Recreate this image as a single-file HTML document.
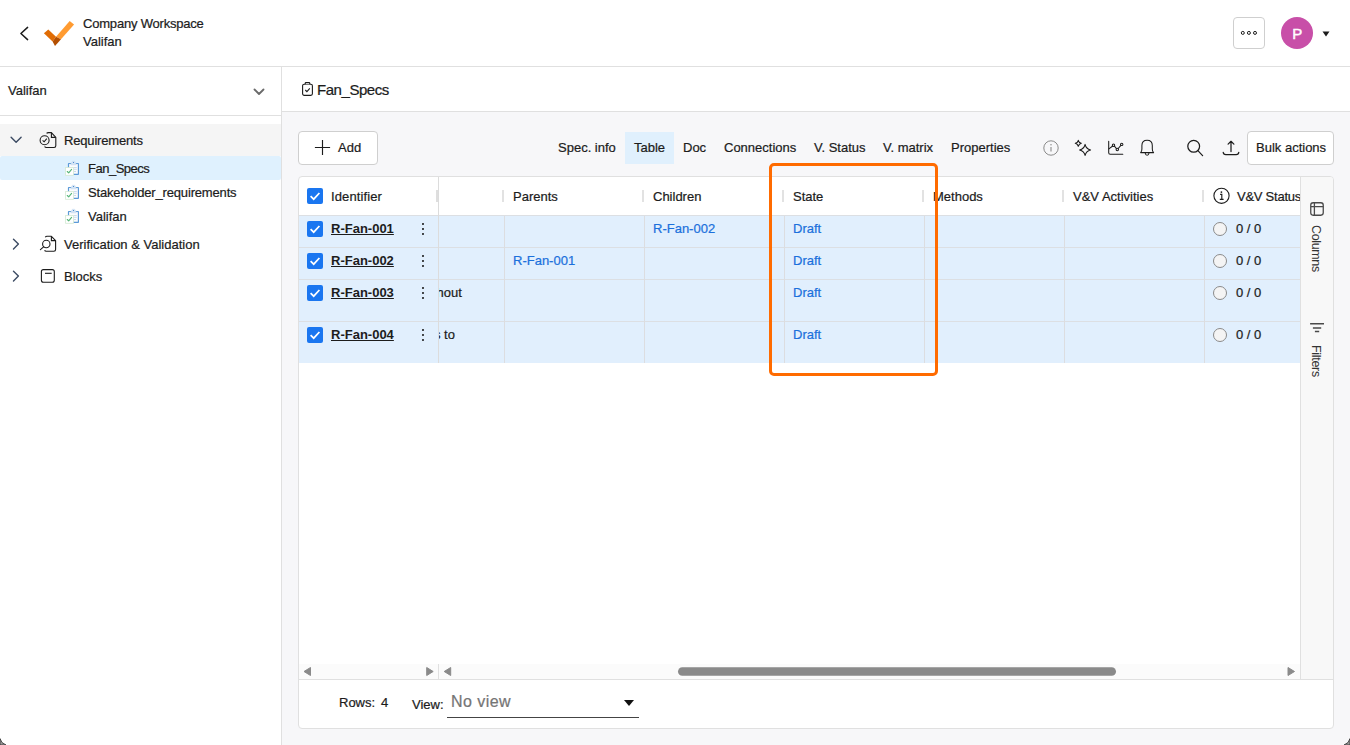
<!DOCTYPE html>
<html><head><meta charset="utf-8">
<style>
*{box-sizing:border-box;margin:0;padding:0}
html,body{width:1350px;height:745px;overflow:hidden;background:#fff}
body{font-family:"Liberation Sans",sans-serif;font-size:13px;color:#1c1c1c;position:relative}
.abs{position:absolute}
#hdr{left:0;top:0;width:1350px;height:67px;border-bottom:1px solid #e0e0e0;background:#fff}
#side{left:0;top:67px;width:282px;height:678px;border-right:1px solid #e0e0e0;background:#fff}
#main{left:282px;top:67px;width:1068px;height:678px;background:#f7f7f9}
#title{left:0;top:0;width:1068px;height:45px;background:#fff;border-bottom:1px solid #e0e0e0}
.t{position:absolute;white-space:nowrap;line-height:1;-webkit-text-stroke:0.22px currentColor}
svg{position:absolute;overflow:visible}
</style></head><body>
<div id="hdr" class="abs">
  <svg style="left:0;top:0" width="80" height="66"><path d="M27.6 27.4 L20.9 33.5 L27.6 39.6" fill="none" stroke="#1c1c1c" stroke-width="1.5" stroke-linecap="round" stroke-linejoin="round"/><path d="M43.9 33.2 L48.3 29.6 L56 36.8 L52.6 41.5 Z" fill="#e06c04"/><path d="M56 36.8 L69.7 20.9 L74.1 24.4 L61 39.2 Z" fill="#ff9b31"/><path d="M56 36.8 L61 39.2 L55 46 L52.6 41.5 Z" fill="#b34f02"/></svg>
  <div class="t" style="left:83px;top:17px;font-size:13px;letter-spacing:-0.2px">Company Workspace</div>
  <div class="t" style="left:83px;top:35px;font-size:13px">Valifan</div>
  <div class="abs" style="left:1233px;top:17px;width:32px;height:32px;border:1px solid #cfcfcf;border-radius:4px;background:#fff"></div>
  <svg style="left:0;top:0" width="1350" height="66"><g fill="none" stroke="#111" stroke-width="0.95"><circle cx="1242.8" cy="32.9" r="1.5"/><circle cx="1248.9" cy="32.9" r="1.5"/><circle cx="1255" cy="32.9" r="1.5"/></g></svg>
  <div class="abs" style="left:1281px;top:17px;width:32px;height:32px;border-radius:16px;background:#c84fa8"></div>
  <div class="t" style="left:1292.2px;top:25.8px;font-size:15px;color:#fff;-webkit-text-stroke:0.45px #fff">P</div>
  <svg style="left:1322px;top:30.8px" width="8" height="6" viewBox="0 0 8 6"><path d="M0.5 0.5 H7.5 L4 5.5 Z" fill="#1c1c1c"/></svg>
</div>
<div id="side" class="abs">
  <div class="t" style="left:8px;top:17px;font-size:13px">Valifan</div>
  <svg style="left:253px;top:21px" width="12" height="8" viewBox="0 0 12 8"><path d="M1.5 1.5 L6 6 L10.5 1.5" fill="none" stroke="#6a6a6a" stroke-width="1.8" stroke-linecap="round" stroke-linejoin="round"/></svg>
  <div class="abs" style="left:0;top:48px;width:281px;height:1px;background:#e0e0e0"></div>
  <div class="abs" style="left:0;top:57px;width:281px;height:32px;background:#f5f5f5"></div>
  <div class="abs" style="left:0;top:89px;width:281px;height:24px;background:#dff1fe;border-radius:2px"></div>
  <svg style="left:0;top:0" width="281" height="300"><path d="M11.1 70.19999999999999 L16.1 75.30000000000001 L21.1 70.19999999999999" fill="none" stroke="#3c4b63" stroke-width="1.4" stroke-linecap="round" stroke-linejoin="round"/><path d="M13.5 172.29999999999998 L18.4 177.1 L13.5 181.9" fill="none" stroke="#3c4b63" stroke-width="1.4" stroke-linecap="round" stroke-linejoin="round"/><path d="M13.5 204.3 L18.4 209.10000000000002 L13.5 213.90000000000003" fill="none" stroke="#3c4b63" stroke-width="1.4" stroke-linecap="round" stroke-linejoin="round"/><path d="M46.6 66.4 Q47.2 65.6 48.4 65.6 H51.4 L55.8 70.4 V78.8 Q55.8 80.5 54.1 80.5 H46.4 Q45.2 80.5 44.6 79.4" fill="none" stroke="#1c1c1c" stroke-width="1.1" stroke-linejoin="round"/><path d="M51.4 65.8 V70.4 H55.6" fill="none" stroke="#1c1c1c" stroke-width="1.1"/><circle cx="44.6" cy="73.2" r="4.5" fill="none" stroke="#1c1c1c" stroke-width="1.1"/><path d="M42.6 73.3 L44.1 74.8 L46.8 71.6" fill="none" stroke="#1c1c1c" stroke-width="1.1"/><g transform="translate(65.2,94.6)"><rect x="3.25" y="1.85" width="10" height="10.9" rx="0.3" fill="#eaf0f7" stroke="#5c9ad8" stroke-width="1.1"/><rect x="4.6" y="3.6" width="7.4" height="8" fill="#fbfcfe"/><path d="M5.9 3.2 V1.6 L7.2 -0.4 H9.4 L10.7 1.6 V3.2 Z" fill="#d3e4f6" stroke="#c2d8f0" stroke-width="0.4"/><circle cx="8.3" cy="0.9" r="0.55" fill="#3b7cc4"/><path d="M8.6 5.9 H11.6 M8.6 7.7 H11.6 M8.6 9.9 H10.8" stroke="#b7cde6" stroke-width="0.7"/><rect x="0.4" y="5.9" width="7.9" height="7.8" fill="#fff" stroke="#d3e9d3" stroke-width="0.8"/><path d="M2.1 9.9 L3.5 11.2 L6.4 7.8" fill="none" stroke="#58b67a" stroke-width="1.15" stroke-linecap="round" stroke-linejoin="round"/></g><g transform="translate(65.2,118.6)"><rect x="3.25" y="1.85" width="10" height="10.9" rx="0.3" fill="#eaf0f7" stroke="#5c9ad8" stroke-width="1.1"/><rect x="4.6" y="3.6" width="7.4" height="8" fill="#fbfcfe"/><path d="M5.9 3.2 V1.6 L7.2 -0.4 H9.4 L10.7 1.6 V3.2 Z" fill="#d3e4f6" stroke="#c2d8f0" stroke-width="0.4"/><circle cx="8.3" cy="0.9" r="0.55" fill="#3b7cc4"/><path d="M8.6 5.9 H11.6 M8.6 7.7 H11.6 M8.6 9.9 H10.8" stroke="#b7cde6" stroke-width="0.7"/><rect x="0.4" y="5.9" width="7.9" height="7.8" fill="#fff" stroke="#d3e9d3" stroke-width="0.8"/><path d="M2.1 9.9 L3.5 11.2 L6.4 7.8" fill="none" stroke="#58b67a" stroke-width="1.15" stroke-linecap="round" stroke-linejoin="round"/></g><g transform="translate(65.2,142.6)"><rect x="3.25" y="1.85" width="10" height="10.9" rx="0.3" fill="#eaf0f7" stroke="#5c9ad8" stroke-width="1.1"/><rect x="4.6" y="3.6" width="7.4" height="8" fill="#fbfcfe"/><path d="M5.9 3.2 V1.6 L7.2 -0.4 H9.4 L10.7 1.6 V3.2 Z" fill="#d3e4f6" stroke="#c2d8f0" stroke-width="0.4"/><circle cx="8.3" cy="0.9" r="0.55" fill="#3b7cc4"/><path d="M8.6 5.9 H11.6 M8.6 7.7 H11.6 M8.6 9.9 H10.8" stroke="#b7cde6" stroke-width="0.7"/><rect x="0.4" y="5.9" width="7.9" height="7.8" fill="#fff" stroke="#d3e9d3" stroke-width="0.8"/><path d="M2.1 9.9 L3.5 11.2 L6.4 7.8" fill="none" stroke="#58b67a" stroke-width="1.15" stroke-linecap="round" stroke-linejoin="round"/></g><path d="M45.3 170.2 Q45.8 169.3 47.0 169.3 H51.4 L55.6 173.6 V182.6 Q55.6 184.3 53.9 184.3 H46.2 Q45.0 184.3 44.6 183.2" fill="none" stroke="#1c1c1c" stroke-width="1.1" stroke-linejoin="round"/><path d="M51.4 169.5 V173.6 H55.4" fill="none" stroke="#1c1c1c" stroke-width="1.1"/><circle cx="46.3" cy="177.0" r="3.7" fill="none" stroke="#1c1c1c" stroke-width="1.1"/><path d="M43.6 179.8 L40.4 182.6" stroke="#1c1c1c" stroke-width="1.1" stroke-linecap="round"/><rect x="41.4" y="202.6" width="12.9" height="12.6" rx="2" fill="none" stroke="#1c1c1c" stroke-width="1.1"/><path d="M45 206.3 H51.7" stroke="#1c1c1c" stroke-width="1.1"/></svg>
  <div class="t" style="left:64px;top:67px;font-size:13px;letter-spacing:-0.17px">Requirements</div>
  <div class="t" style="left:88px;top:95px;font-size:13px;letter-spacing:-0.5px">Fan_Specs</div>
  <div class="t" style="left:88px;top:119px;font-size:13px;letter-spacing:-0.17px">Stakeholder_requirements</div>
  <div class="t" style="left:88px;top:143px;font-size:13px">Valifan</div>
  <div class="t" style="left:64px;top:171px;font-size:13px">Verification &amp; Validation</div>
  <div class="t" style="left:64px;top:203px;font-size:13px">Blocks</div>
</div>
<div id="main" class="abs">
  <div id="title" class="abs"></div>
  <div class="t" style="left:35px;top:15px;font-size:15px;letter-spacing:-0.45px">Fan_Specs</div>

  <svg style="left:20px;top:15px" width="11" height="14" viewBox="0 0 11 14"><rect x="0.6" y="2.2" width="9.8" height="11.2" rx="1.6" fill="none" stroke="#1c1c1c" stroke-width="1.1"/><path d="M3.2 2.2 V1.4 Q3.2 0.6 4 0.6 H7 Q7.8 0.6 7.8 1.4 V2.2" fill="#fff" stroke="#1c1c1c" stroke-width="1.1"/><path d="M3.3 8 L4.9 9.6 L7.8 6.3" fill="none" stroke="#1c1c1c" stroke-width="1.1"/></svg>
  <!-- toolbar -->
  <div class="abs" style="left:16px;top:64px;width:80px;height:34px;border:1px solid #cfcfcf;border-radius:4px;background:#fff"></div>
  <svg style="left:33px;top:73px" width="15" height="15" viewBox="0 0 15 15"><path d="M7.5 0.1 V14.9 M-0.1 7.5 H15.1" stroke="#1c1c1c" stroke-width="1.15" fill="none"/></svg>
  <div class="t" style="left:56px;top:74px;font-size:13px">Add</div>
  <div class="abs" style="left:343px;top:65px;width:49px;height:32px;background:#e0f0fd"></div>
  <div class="t" style="left:276px;top:74px">Spec. info</div>
  <div class="t" style="left:352px;top:74px">Table</div>
  <div class="t" style="left:401px;top:74px">Doc</div>
  <div class="t" style="left:442px;top:74px">Connections</div>
  <div class="t" style="left:532px;top:74px">V. Status</div>
  <div class="t" style="left:601px;top:74px">V. matrix</div>
  <div class="t" style="left:669px;top:74px">Properties</div>
  <div class="abs" style="left:965px;top:64px;width:87px;height:34px;border:1px solid #cfcfcf;border-radius:4px;background:#fff"></div>
  <div class="t" style="left:974px;top:74px">Bulk actions</div>
  <!-- grid -->
  <div id="grid" class="abs" style="left:16px;top:109px;width:1036px;height:553px;background:#fff;border:1px solid #e0e0e0;border-radius:4px;overflow:hidden"><div class="abs" style="left:0;top:2px;width:1034px;height:549px">
    <div id="rows" class="abs" style="left:0;top:0;width:1001px;height:484px">
<div class="abs" style="left:0;top:36px;width:1001px;height:148px;background:#e1effd"></div>
<div class="abs" style="left:0;top:36px;width:1001px;height:1px;background:#dcdfe3"></div>
<div class="abs" style="left:0;top:68px;width:1001px;height:1px;background:#dcdfe3"></div>
<div class="abs" style="left:0;top:100px;width:1001px;height:1px;background:#dcdfe3"></div>
<div class="abs" style="left:0;top:142px;width:1001px;height:1px;background:#dcdfe3"></div>
<div class="abs" style="left:205px;top:37px;width:1px;height:147px;background:#dcdde0"></div>
<div class="abs" style="left:345px;top:37px;width:1px;height:147px;background:#dcdde0"></div>
<div class="abs" style="left:485px;top:37px;width:1px;height:147px;background:#dcdde0"></div>
<div class="abs" style="left:625px;top:37px;width:1px;height:147px;background:#dcdde0"></div>
<div class="abs" style="left:765px;top:37px;width:1px;height:147px;background:#dcdde0"></div>
<div class="abs" style="left:905px;top:37px;width:1px;height:147px;background:#dcdde0"></div>
<div class="abs" style="left:203px;top:11px;width:2px;height:12px;background:#e2e2e2"></div>
<div class="abs" style="left:343px;top:11px;width:2px;height:12px;background:#e2e2e2"></div>
<div class="abs" style="left:483px;top:11px;width:2px;height:12px;background:#e2e2e2"></div>
<div class="abs" style="left:623px;top:11px;width:2px;height:12px;background:#e2e2e2"></div>
<div class="abs" style="left:763px;top:11px;width:2px;height:12px;background:#e2e2e2"></div>
<div class="abs" style="left:903px;top:11px;width:2px;height:12px;background:#e2e2e2"></div>
<div class="abs" style="left:137px;top:11px;width:2px;height:12px;background:#dedede"></div>
<div class="abs" style="left:139px;top:-2px;width:1px;height:186px;background:#dcdcdc"></div>
<div class="t" style="left:32px;top:11px;letter-spacing:0.12px">Identifier</div>
<div class="t" style="left:214px;top:11px">Parents</div>
<div class="t" style="left:354px;top:11px">Children</div>
<div class="t" style="left:494px;top:11px">State</div>
<div class="t" style="left:634px;top:11px">Methods</div>
<div class="t" style="left:774px;top:11px">V&amp;V Activities</div>
<div class="t" style="left:938px;top:11px;letter-spacing:-0.25px">V&amp;V Status</div>
<div class="abs" style="left:8px;top:9px;width:16px;height:16px;border-radius:2px;background:#1a76f0"></div><svg style="left:8px;top:9px" width="16" height="16" viewBox="0 0 16 16"><path d="M3.6 8.2 L6.7 11.2 L12.4 5" fill="none" stroke="#fff" stroke-width="1.7"/></svg>
<div class="abs" style="left:8px;top:42px;width:16px;height:16px;border-radius:2px;background:#1a76f0"></div><svg style="left:8px;top:42px" width="16" height="16" viewBox="0 0 16 16"><path d="M3.6 8.2 L6.7 11.2 L12.4 5" fill="none" stroke="#fff" stroke-width="1.7"/></svg>
<div class="t" style="left:32px;top:43px;font-weight:bold;text-decoration:underline;-webkit-text-stroke:0">R-Fan-001</div>
<svg style="left:122px;top:43px" width="4" height="14" viewBox="0 0 4 14"><circle cx="2" cy="2" r="1.05" fill="#1c1c1c"/><circle cx="2" cy="7" r="1.05" fill="#1c1c1c"/><circle cx="2" cy="12" r="1.05" fill="#1c1c1c"/></svg>
<div class="t" style="left:494px;top:43px;color:#1b70dc">Draft</div>
<div class="abs" style="left:914px;top:43px;width:14px;height:14px;border-radius:7px;border:1px solid #8a8a8a;background:#f4f4f4"></div>
<div class="t" style="left:937px;top:43px">0 / 0</div>
<div class="abs" style="left:8px;top:74px;width:16px;height:16px;border-radius:2px;background:#1a76f0"></div><svg style="left:8px;top:74px" width="16" height="16" viewBox="0 0 16 16"><path d="M3.6 8.2 L6.7 11.2 L12.4 5" fill="none" stroke="#fff" stroke-width="1.7"/></svg>
<div class="t" style="left:32px;top:75px;font-weight:bold;text-decoration:underline;-webkit-text-stroke:0">R-Fan-002</div>
<svg style="left:122px;top:75px" width="4" height="14" viewBox="0 0 4 14"><circle cx="2" cy="2" r="1.05" fill="#1c1c1c"/><circle cx="2" cy="7" r="1.05" fill="#1c1c1c"/><circle cx="2" cy="12" r="1.05" fill="#1c1c1c"/></svg>
<div class="t" style="left:494px;top:75px;color:#1b70dc">Draft</div>
<div class="abs" style="left:914px;top:75px;width:14px;height:14px;border-radius:7px;border:1px solid #8a8a8a;background:#f4f4f4"></div>
<div class="t" style="left:937px;top:75px">0 / 0</div>
<div class="abs" style="left:8px;top:106px;width:16px;height:16px;border-radius:2px;background:#1a76f0"></div><svg style="left:8px;top:106px" width="16" height="16" viewBox="0 0 16 16"><path d="M3.6 8.2 L6.7 11.2 L12.4 5" fill="none" stroke="#fff" stroke-width="1.7"/></svg>
<div class="t" style="left:32px;top:107px;font-weight:bold;text-decoration:underline;-webkit-text-stroke:0">R-Fan-003</div>
<svg style="left:122px;top:107px" width="4" height="14" viewBox="0 0 4 14"><circle cx="2" cy="2" r="1.05" fill="#1c1c1c"/><circle cx="2" cy="7" r="1.05" fill="#1c1c1c"/><circle cx="2" cy="12" r="1.05" fill="#1c1c1c"/></svg>
<div class="t" style="left:494px;top:107px;color:#1b70dc">Draft</div>
<div class="abs" style="left:914px;top:107px;width:14px;height:14px;border-radius:7px;border:1px solid #8a8a8a;background:#f4f4f4"></div>
<div class="t" style="left:937px;top:107px">0 / 0</div>
<div class="abs" style="left:8px;top:148px;width:16px;height:16px;border-radius:2px;background:#1a76f0"></div><svg style="left:8px;top:148px" width="16" height="16" viewBox="0 0 16 16"><path d="M3.6 8.2 L6.7 11.2 L12.4 5" fill="none" stroke="#fff" stroke-width="1.7"/></svg>
<div class="t" style="left:32px;top:149px;font-weight:bold;text-decoration:underline;-webkit-text-stroke:0">R-Fan-004</div>
<svg style="left:122px;top:149px" width="4" height="14" viewBox="0 0 4 14"><circle cx="2" cy="2" r="1.05" fill="#1c1c1c"/><circle cx="2" cy="7" r="1.05" fill="#1c1c1c"/><circle cx="2" cy="12" r="1.05" fill="#1c1c1c"/></svg>
<div class="t" style="left:494px;top:149px;color:#1b70dc">Draft</div>
<div class="abs" style="left:914px;top:149px;width:14px;height:14px;border-radius:7px;border:1px solid #8a8a8a;background:#f4f4f4"></div>
<div class="t" style="left:937px;top:149px">0 / 0</div>
<div class="t" style="left:354px;top:43px;color:#1b70dc">R-Fan-002</div>
<div class="t" style="left:214px;top:75px;color:#1b70dc">R-Fan-001</div>
<div class="t" style="left:140px;top:107px;width:30px;overflow:hidden"><span style="margin-left:-2.5px">hout</span></div>
<div class="t" style="left:140px;top:149px;width:30px;overflow:hidden"><span style="margin-left:-5px">s to</span></div>
<svg style="left:913.8px;top:8px" width="17" height="17" viewBox="0 0 17 17"><circle cx="8.5" cy="8.8" r="7.6" fill="none" stroke="#1c1c1c" stroke-width="1.1"/><path d="M7.1 7.4 H8.8 V12.3 M6.8 12.4 H10.6" fill="none" stroke="#1c1c1c" stroke-width="1.15"/><circle cx="8.4" cy="5.1" r="0.9" fill="#1c1c1c"/></svg>
</div>
    <div class="abs" style="left:1001px;top:-2px;width:1px;height:502px;background:#e0e0e0"></div>
    <div class="abs" style="left:1002px;top:-2px;width:32px;height:502px;background:#f8f8f8"></div>
    <div class="abs" style="left:0;top:485px;width:1001px;height:15px;background:#fbfbfb"></div>
    <div class="abs" style="left:0;top:500px;width:1034px;height:1px;background:#e0e0e0"></div>
    <div class="t" style="left:40px;top:517px">Rows:</div>
    <div class="t" style="left:82px;top:517px">4</div>
    <div class="t" style="left:113px;top:519px">View:</div>
    <div class="t" style="left:152px;top:515px;font-size:16px;color:#757575;letter-spacing:0.45px">No view</div>
    <div class="abs" style="left:148px;top:538px;width:192px;height:1px;background:#444"></div>
    <svg style="left:325px;top:521.4px" width="10" height="6" viewBox="0 0 10 6"><path d="M0 0 H10 L5 6 Z" fill="#111"/></svg>
  </div></div>
<svg style="left:761px;top:73px" width="16" height="16" viewBox="0 0 16 16"><circle cx="8" cy="8" r="7.2" fill="none" stroke="#8a8a8a" stroke-width="1"/><path d="M8 7 V11.5" stroke="#8a8a8a" stroke-width="1.1"/><circle cx="8" cy="4.8" r="0.75" fill="#8a8a8a"/></svg>
<svg style="left:1028px;top:135px" width="14" height="14" viewBox="0 0 14 14"><rect x="0.75" y="0.75" width="12.5" height="12.5" rx="2.4" fill="none" stroke="#4a4a4a" stroke-width="1.3"/><path d="M0.8 4.6 H13.2 M4.4 0.8 V13.2" stroke="#4a4a4a" stroke-width="1.3"/></svg>
<div class="t" style="left:1040.2px;top:158.4px;transform-origin:0 0;transform:rotate(90deg);font-size:12.5px;letter-spacing:-0.35px;color:#333;-webkit-text-stroke:0">Columns</div>
<svg style="left:1028px;top:256px" width="14" height="10" viewBox="0 0 14 10"><path d="M0.1 0.8 H14 M2.9 4.9 H11.2 M4.9 8.6 H9.2" stroke="#4a4a4a" stroke-width="1.5"/></svg>
<div class="t" style="left:1040.2px;top:277.6px;transform-origin:0 0;transform:rotate(90deg);font-size:12.5px;letter-spacing:-0.3px;color:#333;-webkit-text-stroke:0">Filters</div>
<svg style="left:0;top:0" width="1068" height="678"><path d="M28.5 600.5 V608.5 L22 604.5 Z" fill="#8a8a8a" stroke="#8a8a8a" stroke-width="1" stroke-linejoin="round"/><path d="M144.7 600.5 V608.5 L151.2 604.5 Z" fill="#8a8a8a" stroke="#8a8a8a" stroke-width="1" stroke-linejoin="round"/><path d="M168.7 600.5 V608.5 L162.2 604.5 Z" fill="#8a8a8a" stroke="#8a8a8a" stroke-width="1" stroke-linejoin="round"/><path d="M1006 600.5 V608.5 L1012.5 604.5 Z" fill="#8a8a8a" stroke="#8a8a8a" stroke-width="1" stroke-linejoin="round"/><rect x="396" y="600.2" width="438" height="8.6" rx="4.3" fill="#8a8a8a"/></svg>
<div class="abs" style="left:156px;top:597px;width:1px;height:15px;background:#e0e0e0"></div>
<svg style="left:0;top:0" width="1068" height="110"><g transform="translate(-282,-67)" fill="none" stroke="#1c1c1c" stroke-width="1.05" stroke-linejoin="round" stroke-linecap="round"><path d="M1078.3 140.3 Q1078.84 142.76000000000002 1081.3 143.3 Q1078.84 143.84 1078.3 146.3 Q1077.76 143.84 1075.3 143.3 Q1077.76 142.76000000000002 1078.3 140.3 Z"/><path d="M1085.1 144.4 Q1086.09 148.91 1090.6 149.9 Q1086.09 150.89000000000001 1085.1 155.4 Q1084.11 150.89000000000001 1079.6 149.9 Q1084.11 148.91 1085.1 144.4 Z"/><path d="M1108.7 141.2 V152.8 Q1108.7 154.3 1110.2 154.3 H1122.8"/><path d="M1108.9 148.9 L1112.7 146 M1114.4 146.2 L1116.5 148.6 M1118.2 148.5 L1120.9 145.3"/><circle cx="1113.5" cy="145.2" r="1.2"/><circle cx="1117.3" cy="149.5" r="1.2"/><circle cx="1121.7" cy="144.4" r="1.2"/><path d="M1140.6 152.6 Q1141.9 151.4 1141.9 149 V145.6 Q1141.9 140.2 1147.1 140.2 Q1152.3 140.2 1152.3 145.6 V149 Q1152.3 151.4 1153.6 152.6 Z"/><path d="M1145.2 153 Q1145.6 155.3 1147.1 155.3 Q1148.6 155.3 1149 153"/><circle cx="1193.7" cy="146.3" r="5.9" stroke-width="1.25"/><path d="M1197.9 150.6 L1202.6 155.6" stroke-width="1.25"/><path d="M1231 151.6 V141.6 M1228.1 144.1 L1231 141.3 L1233.9 144.1" stroke-width="1.25"/><path d="M1223.2 152.3 Q1223.4 154.6 1225.8 154.6 H1236.2 Q1238.6 154.6 1238.8 152.3" stroke-width="1.25"/></g></svg>
  <div class="abs" style="left:487px;top:96px;width:169px;height:213px;border:3px solid #ff6b00;border-radius:5px"></div>
</div>
<svg style="left:0;top:735px;z-index:50" width="1350" height="10"><path d="M0 3.6 Q1 8.3 6 10 H0 Z" fill="#9a9a9a" stroke="#3a3a3a" stroke-width="0.9"/><path d="M1350 3.6 Q1349 8.3 1344 10 H1350 Z" fill="#9a9a9a" stroke="#3a3a3a" stroke-width="0.9"/></svg>
</body></html>
